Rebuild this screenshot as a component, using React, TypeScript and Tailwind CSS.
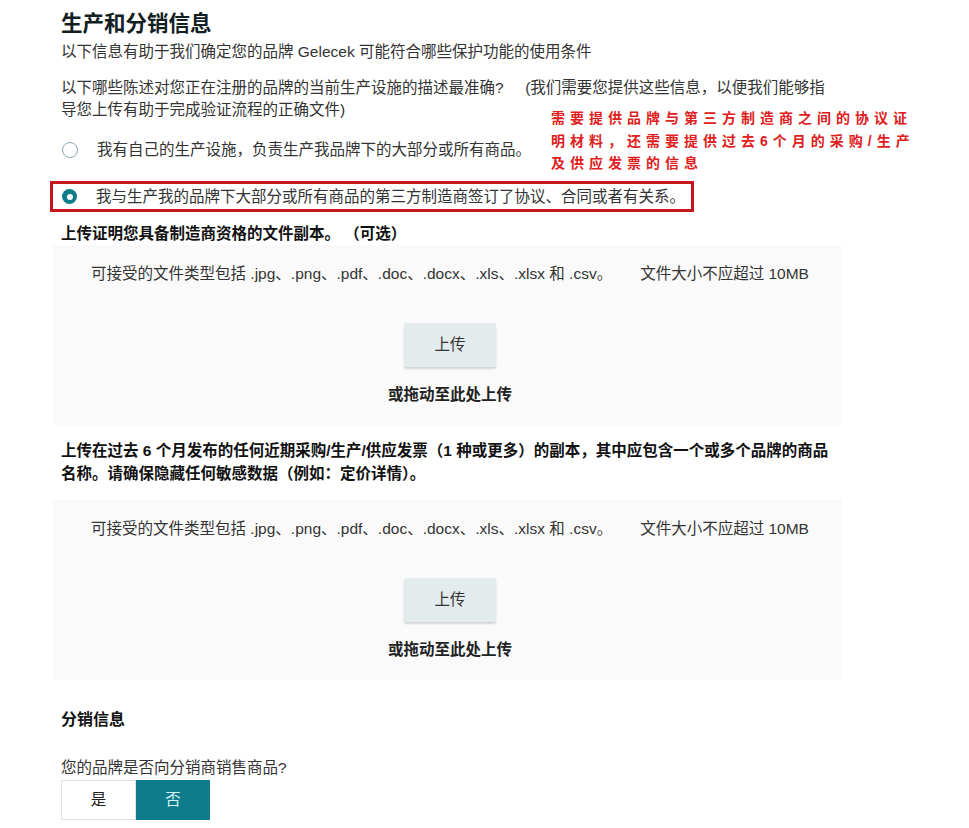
import React from "react";

const font = { fontFamily: '"Liberation Sans", "Noto Sans CJK SC", sans-serif' };

function Radio({ checked }: { checked: boolean }) {
  return checked ? (
    <span className="flex h-[15px] w-[15px] shrink-0 items-center justify-center rounded-full bg-[#0f7c8a]">
      <span className="h-[6px] w-[6px] rounded-full bg-white" />
    </span>
  ) : (
    <span className="h-[16px] w-[16px] shrink-0 rounded-full border-[1.5px] border-[#86aab0] bg-white" />
  );
}

function UploadBox() {
  return (
    <div className="flex h-[180px] w-[789px] flex-col items-center bg-[#fafafa] pt-[18px]">
      <div className="ml-[5px] flex gap-[28px] text-[15.5px] leading-[22px] text-[#333]">
        <span>可接受的文件类型包括 .jpg、.png、.pdf、.doc、.docx、.xls、.xlsx 和 .csv。</span>
        <span>文件大小不应超过 10MB</span>
      </div>
      <button className="ml-[5px] mt-[38px] h-[44px] w-[92px] rounded-[2px] bg-[#e3ebed] text-[15.5px] text-[#333] shadow-[0_2px_2px_rgba(0,0,0,0.15)]">
        上传
      </button>
      <div className="ml-[5px] mt-[17px] text-[15.5px] font-bold leading-[22px] text-[#222]">或拖动至此处上传</div>
    </div>
  );
}

export default function App() {
  return (
    <div className="relative min-h-[828px] w-[969px] bg-white pl-[53px] text-[#333]" style={font}>
      <div className="pt-[9px]">
        <h1 className="ml-2 text-[21.5px] font-bold leading-[30px] text-[#12211f]">生产和分销信息</h1>
        <p className="ml-2 mt-[2px] text-[15.5px] leading-[22px] text-[#333]">
          以下信息有助于我们确定您的品牌 Gelecek 可能符合哪些保护功能的使用条件
        </p>
        <p className="ml-2 mt-[14px] text-[15.5px] leading-[22px] text-[#333]">
          以下哪些陈述对您正在注册的品牌的当前生产设施的描述最准确?&nbsp;&nbsp;&nbsp;&nbsp;&nbsp;(我们需要您提供这些信息，以便我们能够指
          <br />
          导您上传有助于完成验证流程的正确文件)
        </p>
        <div className="ml-[9px] mt-[18px] flex h-[22px] items-center gap-[19px] text-[15.5px] leading-[22px]">
          <Radio checked={false} />
          <span>我有自己的生产设施，负责生产我品牌下的大部分或所有商品。</span>
        </div>
        <div className="-ml-[3px] mt-[20px] flex h-[31px] w-[644px] items-center gap-[19px] border-[3px] border-[#c8161d] pl-[9px] text-[15.5px] leading-[22px]">
          <Radio checked />
          <span>我与生产我的品牌下大部分或所有商品的第三方制造商签订了协议、合同或者有关系。</span>
        </div>
        <h3 className="ml-2 mt-[11px] text-[15.5px] font-bold leading-[22px] text-[#111]">
          上传证明您具备制造商资格的文件副本。&nbsp;（可选）
        </h3>
        <UploadBox />
        <h3 className="ml-2 mt-[14px] text-[15.5px] font-bold leading-[23px] text-[#111]">
          上传在过去 6 个月发布的任何近期采购/生产/供应发票（1 种或更多）的副本，其中应包含一个或多个品牌的商品
          <br />
          名称。请确保隐藏任何敏感数据（例如：定价详情）。
        </h3>
        <div className="mt-[15px]">
          <UploadBox />
        </div>
        <h2 className="ml-2 mt-[28px] text-[16px] font-bold leading-[24px] text-[#111]">分销信息</h2>
        <p className="ml-2 mt-[25px] text-[15.5px] leading-[22px] text-[#333]">您的品牌是否向分销商销售商品?</p>
        <div className="ml-2 mt-[1px] flex h-[40px] w-[149px]">
          <div className="flex w-[75px] items-center justify-center border border-[#e2e2e2] bg-white text-[15.5px] text-[#222]">
            是
          </div>
          <div className="flex w-[74px] items-center justify-center bg-[#0e7c8c] text-[15.5px] text-[#d4f1f4]">
            否
          </div>
        </div>
      </div>
      <div className="absolute left-[551px] top-[107px] text-[14px] font-bold leading-[22.5px] tracking-[5px] text-[#e02020]">
        需要提供品牌与第三方制造商之间的协议证
        <br />
        明材料，还需要提供过去6个月的采购/生产
        <br />
        及供应发票的信息
      </div>
    </div>
  );
}
